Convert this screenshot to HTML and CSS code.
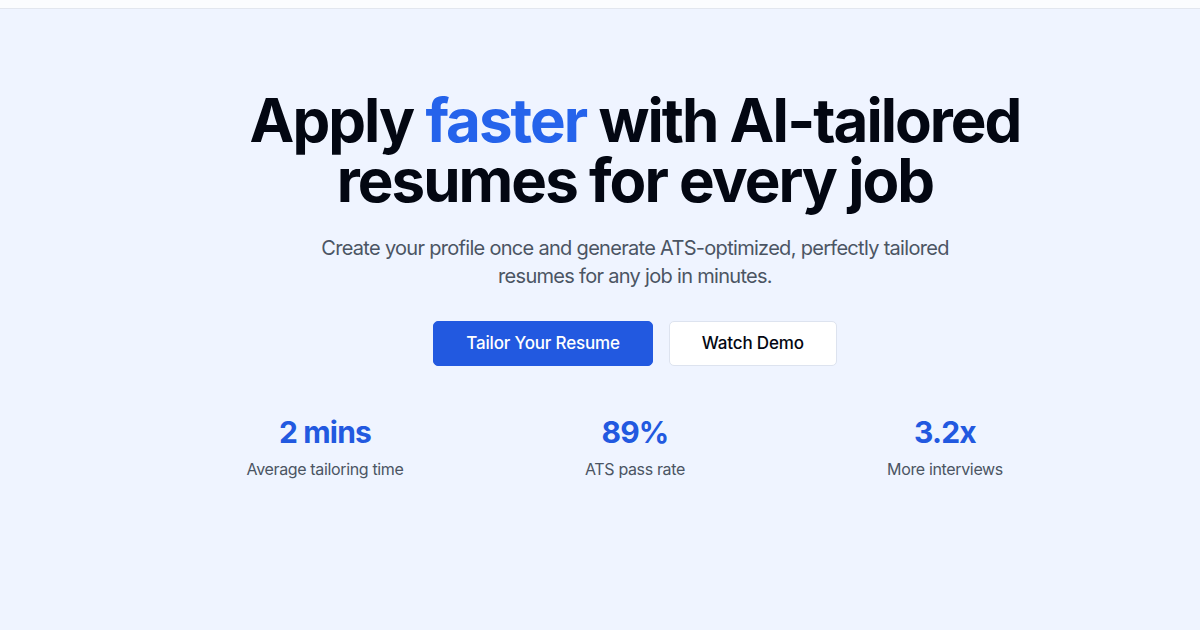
FILE: index.html
```html
<!DOCTYPE html>
<html lang="en">
<head>
  <meta charset="UTF-8">
  <meta name="viewport" content="width=device-width, initial-scale=1.0">
  <title>Tailor - AI Resume Builder</title>
  <link rel="stylesheet" href="styles.css">
</head>
<body>
  <div class="top-bar"></div>

  <main class="hero">
    <div class="hero-inner">
      <h1 class="hero-title">Apply <span class="accent">faster</span> with AI-tailored resumes for every job</h1>
      <p class="hero-subtitle">Create your profile once and generate ATS-optimized, perfectly tailored resumes for any job in minutes.</p>

      <div class="hero-actions">
        <button class="btn btn-primary">Tailor Your Resume</button>
        <button class="btn btn-secondary">Watch Demo</button>
      </div>

      <div class="stats">
        <div class="stat">
          <div class="stat-value">2 mins</div>
          <div class="stat-label">Average tailoring time</div>
        </div>
        <div class="stat">
          <div class="stat-value">89%</div>
          <div class="stat-label">ATS pass rate</div>
        </div>
        <div class="stat">
          <div class="stat-value">3.2x</div>
          <div class="stat-label">More interviews</div>
        </div>
      </div>
    </div>
  </main>
</body>
</html>
```

FILE: styles.css
```css
body {
  margin: 0;
  padding: 0;
  font-family: Inter, 'Noto Sans', sans-serif;
  height: 100vh;
  overflow: hidden;
  display: flex;
  flex-direction: column;
  background-color: #eff4ff;
  color: #030712;
}

.top-bar {
  height: 8px;
  background-color: #fbfcfe;
  border-bottom: 1px solid #e2e6ee;
  flex-shrink: 0;
}

.hero {
  flex: 1;
  padding-top: 81px;
  padding-left: 70px;
}

.hero-inner {
  max-width: 1000px;
  margin: 0 auto;
  text-align: center;
}

.hero-title {
  margin: 0 auto 24px;
  font-size: 60px;
  line-height: 1;
  font-weight: 700;
  letter-spacing: -0.033em;
  max-width: 800px;
}

.hero-title .accent {
  color: #2563eb;
}

.hero-subtitle {
  margin: 0 auto;
  max-width: 672px;
  font-size: 20px;
  line-height: 28px;
  letter-spacing: -0.035em;
  color: #4b5563;
}

.hero-actions {
  display: flex;
  justify-content: center;
  gap: 16px;
  margin-top: 31px;
}

.btn {
  font-family: inherit;
  font-size: 17px;
  font-weight: 500;
  line-height: 27px;
  padding: 8px 32px;
  border-radius: 5px;
  cursor: pointer;
  letter-spacing: -0.01em;
}

.btn-primary {
  background-color: #2259e0;
  color: #ffffff;
  border: 1px solid #2259e0;
}

.btn-primary:hover {
  background-color: #1d4ed8;
}

.btn-secondary {
  background-color: #ffffff;
  color: #030712;
  border: 1px solid #dde3ef;
}

.stats {
  display: grid;
  grid-template-columns: repeat(3, 1fr);
  gap: 32px;
  max-width: 898px;
  margin: 48px auto 0;
}

.stat-value {
  font-size: 30px;
  line-height: 36px;
  font-weight: 700;
  letter-spacing: -0.027em;
  color: #2259e0;
}

.stat-label {
  margin-top: 7px;
  font-size: 16px;
  line-height: 24px;
  letter-spacing: -0.022em;
  color: #4b5563;
}
```
